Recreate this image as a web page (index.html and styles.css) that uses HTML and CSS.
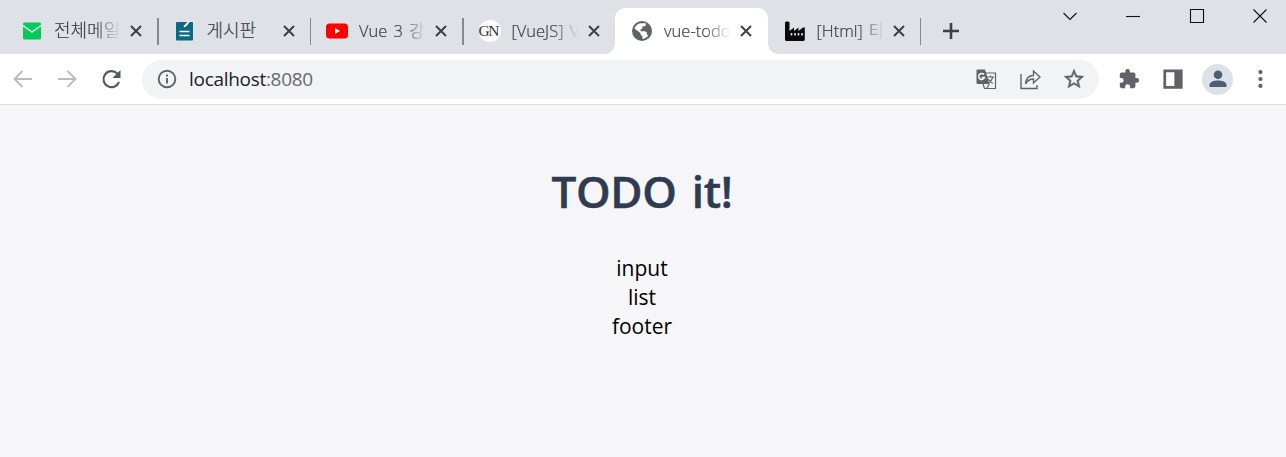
FILE: index.html
```html
<!DOCTYPE html>
<html lang="ko">
<head>
<meta charset="utf-8">
<title>vue-todo</title>
<link rel="stylesheet" href="styles.css">
</head>
<body>
<header class="tabstrip">
  <div class="tab">
    <svg class="favicon" viewBox="0 0 22 22"><rect x="2" y="2.500" width="18" height="17" rx="1.500" fill="#08c75b"/><path d="M2 5.500l9 6.500 9-6.500" fill="none" stroke="#e9f5ee" stroke-width="1.500"/></svg>
    <span class="label ko fade">전체메일</span>
    <svg class="close" viewBox="0 0 12 12"><path d="M1 1l10 10M11 1L1 11"/></svg>
  </div>
  <div class="tab">
    <svg class="favicon" viewBox="0 0 22 22"><rect x="2" y="2" width="17" height="18.500" rx="1" fill="#086b85"/><path d="M9.500 6l4.500-4.500h2L13.500 5l-3 2.500z" fill="#fff"/><path d="M5.500 11.500h10M5.500 15.500h10" stroke="#fff" stroke-width="1.500"/></svg>
    <span class="label ko">게시판</span>
    <svg class="close" viewBox="0 0 12 12"><path d="M1 1l10 10M11 1L1 11"/></svg>
  </div>
  <div class="tab">
    <svg class="favicon" viewBox="0 0 22 22"><rect x="0" y="3.500" width="22" height="15" rx="3.500" fill="#f00"/><path d="M9 8v6l5-3z" fill="#fff"/></svg>
    <span class="label fade">Vue 3 강</span>
    <svg class="close" viewBox="0 0 12 12"><path d="M1 1l10 10M11 1L1 11"/></svg>
  </div>
  <div class="tab">
    <span class="favicon monogram">GN</span>
    <span class="label fade">[VueJS] V</span>
    <svg class="close" viewBox="0 0 12 12"><path d="M1 1l10 10M11 1L1 11"/></svg>
  </div>
  <div class="tab active">
    <svg class="favicon" viewBox="0 0 22 22"><circle cx="11" cy="11" r="10" fill="#5f6368"/><path d="M11.500 3.200h3.300v1.500a1.500 1.500 0 0 1-1.500 1.500h-1.800v2L9.500 9.500v1.800h4.500l2 1.500v2.200h1.500a8 8 0 0 1-6 4v-2.500l-2-2v-1.500L3.500 8.500a8 8 0 0 1 8-5.300z" fill="#fff"/></svg>
    <span class="label fade">vue-todo</span>
    <svg class="close" viewBox="0 0 12 12"><path d="M1 1l10 10M11 1L1 11"/></svg>
  </div>
  <div class="tab">
    <svg class="favicon" viewBox="0 0 22 22"><path d="M1 20V2.500l1-1h2.500l1 1V11l4.500-3.500V11l4.500-3.500V11l4.500-3.500h1.800V20l-1 1H2z" fill="#0a0a0c"/><path d="M7.500 13v2.500M11 13v2.500M14.500 13v2.500M18 13v2.500" stroke="#dee1e6" stroke-width="1.600"/></svg>
    <span class="label fade">[Html] 타</span>
    <svg class="close" viewBox="0 0 12 12"><path d="M1 1l10 10M11 1L1 11"/></svg>
  </div>
  <svg class="newtab" viewBox="0 0 18 18"><path d="M9 1v16M1 9h16"/></svg>
  <div class="window-controls">
    <svg viewBox="0 0 16 16"><path d="M1.500 5L8 11.500 14.500 5"/></svg>
    <svg viewBox="0 0 16 16"><path d="M1 8.500h14"/></svg>
    <svg viewBox="0 0 16 16"><path d="M1.500 1.500h13v13h-13z"/></svg>
    <svg viewBox="0 0 16 16"><path d="M1.500 1.500l13 13M14.500 1.500l-13 13"/></svg>
  </div>
</header>
<nav class="toolbar">
  <div class="navigation">
    <svg class="muted" viewBox="0 0 24 24"><path d="M21 12H4M11.500 4L3.500 12l8 8"/></svg>
    <svg class="muted" viewBox="0 0 24 24"><path d="M3 12h17M12.500 4l8 8-8 8"/></svg>
    <svg viewBox="0 0 24 24"><path d="M20 15A8 8 0 1 1 18.200 6.500L20 8.500"/><path class="solid" d="M21.500 3v8h-8z"/></svg>
  </div>
  <div class="address">
    <svg class="info" viewBox="0 0 20 20"><circle cx="10" cy="10" r="8.300"/><path d="M10 9v5.500M10 5.500v2"/></svg>
    <span class="url">localhost<span class="port">:8080</span></span>
    <div class="address-actions">
      <svg viewBox="0 0 22 22"><path d="M10 5h10.500v15.500H9.500L8 16" fill="none" stroke="#5f6368" stroke-width="1.200"/><path d="M2.500 1.500H10l4.500 14.500h-12a1 1 0 0 1-1-1v-12.500a1 1 0 0 1 1-1z" fill="#5f6368"/><path d="M9 6.500A3 3 0 1 0 9.500 9.500H6.700" fill="none" stroke="#fff" stroke-width="1.500"/><path d="M12 9h7M15.500 7.500V9M17.800 9c-.8 3-2.500 5-4.300 6M13.200 11c1.300 2 2.800 3.500 4.600 4.500M11.500 20.500l3-4.500" fill="none" stroke="#5f6368" stroke-width="1.200"/></svg>
      <svg viewBox="0 0 22 22"><path d="M2 6v14.500h16V17M6.500 16c.5-5.500 3.500-8.500 8-8.500V3l6.500 6-6.500 6v-4c-3.500 0-6 1.500-8 5z" fill="none" stroke="#5f6368" stroke-width="1.400"/></svg>
      <svg viewBox="1 1 22 22"><path d="M22 9.240l-7.190-.62L12 2 9.190 8.630 2 9.240l5.460 4.730L5.820 21 12 17.270 18.180 21l-1.630-7.030L22 9.240zM12 15.400l-3.760 2.270 1-4.280-3.320-2.880 4.380-.38L12 6.100l1.710 4.040 4.380.38-3.320 2.880 1 4.280L12 15.400z" fill="#5f6368" stroke="#5f6368" stroke-width=".4"/></svg>
    </div>
  </div>
  <div class="tools">
    <svg viewBox="0 0 24 24"><path d="M20.500 11H19V7c0-1.100-.9-2-2-2h-4V3.500a2.500 2.500 0 0 0-5 0V5H4c-1.100 0-2 .9-2 2v3.800h1.500a2.700 2.700 0 0 1 0 5.400H2V20c0 1.100.9 2 2 2h3.800v-1.500a2.700 2.700 0 0 1 5.400 0V22H17c1.100 0 2-.9 2-2v-4h1.500a2.500 2.500 0 0 0 0-5z" fill="#5f6368"/></svg>
    <svg viewBox="0 0 24 24"><path fill-rule="evenodd" d="M1.500 1.500h21v21h-21zM4.500 4.500v15h9v-15z" fill="#5f6368"/></svg>
    <span class="avatar"><svg viewBox="0 0 20 20"><circle cx="10" cy="5.700" r="4.300" fill="#505c75"/><path d="M1.500 18v-2.200c0-2.800 4.500-4.300 8.500-4.300s8.500 1.500 8.500 4.300V18z" fill="#505c75"/></svg></span>
    <svg viewBox="0 0 24 24"><g fill="#5f6368"><circle cx="12.500" cy="4.400" r="2.300"/><circle cx="12.500" cy="12" r="2.300"/><circle cx="12.500" cy="19.600" r="2.300"/></g></svg>
  </div>
</nav>
<main class="page">
  <h1 class="title">TODO it!</h1>
  <div class="row input">input</div>
  <div class="row list">list</div>
  <div class="row footer">footer</div>
</main>
</body>
</html>
```

FILE: styles.css
```css
* { box-sizing: border-box; }
body { margin: 0; height: 457px; overflow: hidden; background: #f6f6f8; font-family: "Open Sans", "Noto Sans CJK KR", sans-serif; }
svg { display: block; flex: none; }
.tabstrip { height: 54px; background: #dee1e6; display: flex; padding-left: 5px; }
.tab { position: relative; width: 152.5px; height: 46px; margin-top: 8px; padding-left: 16px; display: flex; align-items: center; flex: none; }
.tab:not(.active)::after { content: ""; position: absolute; right: -1px; top: 10px; width: 1.5px; height: 27px; background: #85888d; }
.favicon { width: 22px; height: 22px; flex: none; }
.label { width: 70px; margin-left: 11px; overflow: hidden; white-space: nowrap; font-size: 16.5px; line-height: 28px; color: #3c4043; font-weight: 350; word-spacing: 2px; -webkit-text-stroke: .2px #3c4043; }
.ko { font-size: 18px; font-weight: 300; padding-bottom: 2px; }
.fade { -webkit-mask-image: linear-gradient(90deg, #000 58%, transparent 95%); mask-image: linear-gradient(90deg, #000 58%, transparent 95%); }
.close { width: 12px; height: 12px; margin-left: 6px; fill: none; stroke: #3c4043; stroke-width: 2; }
.monogram { border-radius: 50%; background: #fff; color: #333; font: 15.5px/22px "Liberation Serif", serif; letter-spacing: -1.5px; white-space: nowrap; }
.active { background: #fff; border-radius: 10px 10px 0 0; }
.active::before, .active::after { content: ""; position: absolute; bottom: 0; width: 10px; height: 10px; }
.active::before { left: -10px; background: radial-gradient(circle at 0 0, transparent 9.5px, #fff 10px); }
.active::after { right: -10px; background: radial-gradient(circle at 100% 0, transparent 9.5px, #fff 10px); }
.newtab { width: 18px; height: 18px; margin: 22px 0 0 22px; fill: none; stroke: #3c4043; stroke-width: 2.6; }
.window-controls { margin-left: auto; padding: 8px 18px 0 0; display: flex; gap: 47.3px; }
.window-controls svg { width: 16px; height: 16px; fill: none; stroke: #111; stroke-width: 1.1; }
.toolbar { height: 51px; background: #fff; border-bottom: 1px solid #dcddde; display: flex; align-items: center; }
.navigation { width: 142px; padding-left: 11px; display: flex; gap: 20px; }
.navigation svg { width: 24px; height: 24px; fill: none; stroke: #55585c; stroke-width: 2.1; }
.navigation .muted { stroke: #b9bbbd; stroke-width: 1.8; }
.navigation .solid { fill: #55585c; stroke: none; }
.address { width: 957px; height: 39px; border-radius: 20px; background: #f1f3f4; display: flex; align-items: center; padding: 0 14px 0 15px; }
.info { width: 20px; height: 20px; fill: none; stroke: #5f6368; stroke-width: 1.9; }
.url { margin-left: 12px; font-size: 19px; line-height: 28px; letter-spacing: -.3px; color: #202124; }
.port { color: #66696d; }
.address-actions { margin-left: auto; display: flex; gap: 22px; }
.address-actions svg { width: 22px; height: 22px; }
.tools { display: flex; align-items: center; margin-left: 19px; }
.tools > svg { width: 22px; height: 22px; }
.tools > svg:nth-child(2) { margin-left: 22px; }
.tools > svg:last-child { margin-left: 16px; }
.avatar { width: 31px; height: 31px; margin-left: 18px; border-radius: 50%; background: #dee1e6; display: grid; place-items: center; }
.avatar svg { width: 20px; height: 20px; }
.page { padding: 56px 2px 0 0; text-align: center; }
.title { margin: 0 0 32px; color: #2f3b52; font-size: 44px; line-height: 61px; font-weight: 600; word-spacing: 4px; letter-spacing: -.3px; -webkit-text-stroke: .5px #2f3b52; }
.row { font-size: 21px; line-height: 29px; color: #000; }
```
